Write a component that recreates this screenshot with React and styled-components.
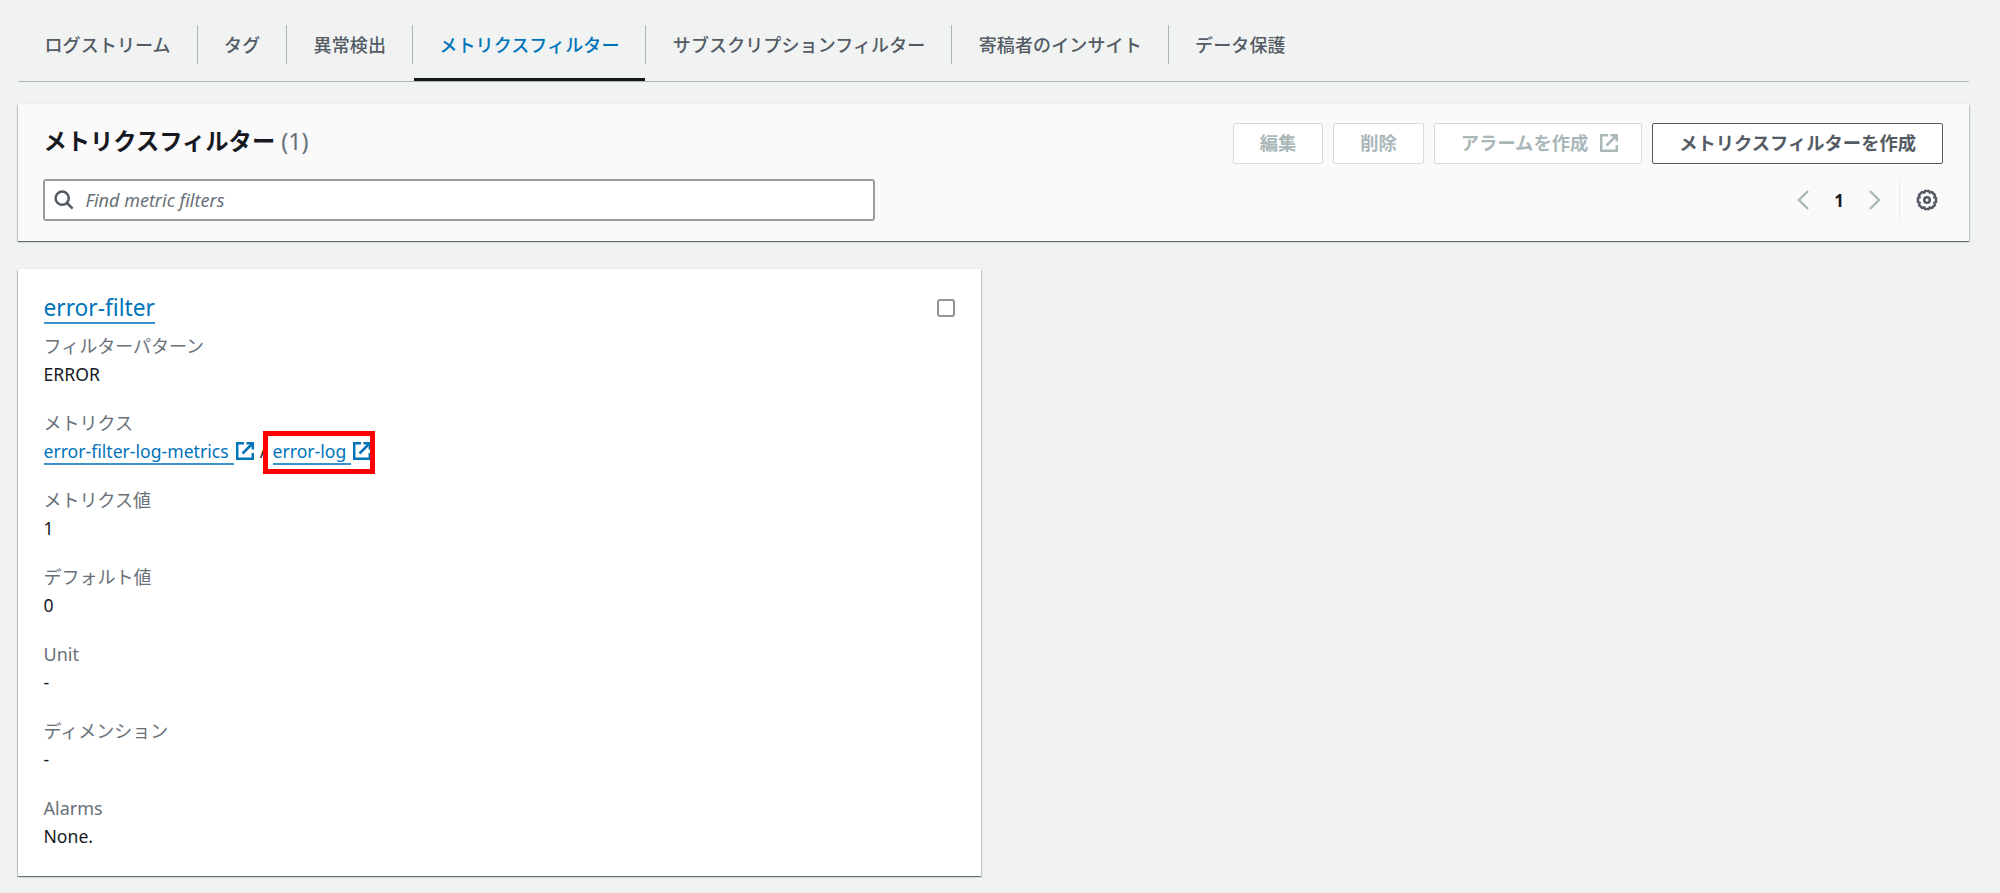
import React from "react";
import styled, { createGlobalStyle } from "styled-components";

const tabs = [
  "ログストリーム",
  "タグ",
  "異常検出",
  "メトリクスフィルター",
  "サブスクリプションフィルター",
  "寄稿者のインサイト",
  "データ保護",
];

const ExternalIcon = () => (
  <IconSvg viewBox="0 0 18 18" $size={18}>
    <path d="M8 1.2H1.2v15.6h15.6V11" />
    <path d="M10.5 1.2h6.3v6.3" />
    <path d="M6.5 11.5l9.5-9.5" />
  </IconSvg>
);

const SearchIcon = () => (
  <IconSvg viewBox="0 0 20 20" $size={20}>
    <circle cx="8.2" cy="8.2" r="6.6" />
    <path d="M13 13l5.6 5.6" />
  </IconSvg>
);

const GearIcon = () => (
  <IconSvg viewBox="0 0 22 22" $size={22}>
    <path d="M9 2h4l.8 1.6 2.2-.5 2.9 2.9-.5 2.2L20 9v4l-1.6.8.5 2.2-2.9 2.9-2.2-.5L13 20H9l-.8-1.6-2.2.5L3.1 16l.5-2.2L2 13V9l1.6-.8L3.1 6 6 3.1l2.2.5z" />
    <circle cx="11" cy="11" r="2.8" />
  </IconSvg>
);

const App = () => {
  return (
    <>
      <GlobalStyle />
      <Page>
        <TabList>
          {tabs.map((tab) => (
            <Tab key={tab} $active={tab === "メトリクスフィルター"}>
              {tab}
            </Tab>
          ))}
        </TabList>

        <Header>
          <HeaderRow>
            <Title>
              メトリクスフィルター <span>(1)</span>
            </Title>
            <Actions>
              <Button disabled>編集</Button>
              <Button disabled>削除</Button>
              <Button disabled $withIcon>
                アラームを作成
                <ExternalIcon />
              </Button>
              <Button>メトリクスフィルターを作成</Button>
            </Actions>
          </HeaderRow>
          <FilterRow>
            <Search>
              <SearchIcon />
              <input placeholder="Find metric filters" />
            </Search>
            <Pagination>
              <Arrow viewBox="0 0 12 20">
                <path d="M11 1L2 10l9 9" />
              </Arrow>
              <PageNumber>1</PageNumber>
              <Arrow viewBox="0 0 12 20">
                <path d="M1 1l9 9-9 9" />
              </Arrow>
              <Settings>
                <GearIcon />
              </Settings>
            </Pagination>
          </FilterRow>
        </Header>

        <Card>
          <CardHeader>
            <CardTitle>error-filter</CardTitle>
            <Checkbox type="checkbox" />
          </CardHeader>
          <Field>
            <dt>フィルターパターン</dt>
            <dd>ERROR</dd>
          </Field>
          <Field>
            <dt>メトリクス</dt>
            <MetricLinks>
              <Link>
                <span>error-filter-log-metrics</span>
                <ExternalIcon />
              </Link>
              <Slash>/</Slash>
              <Link>
                <span>error-log</span>
                <ExternalIcon />
                <Highlight />
              </Link>
            </MetricLinks>
          </Field>
          <Field>
            <dt>メトリクス値</dt>
            <dd>1</dd>
          </Field>
          <Field>
            <dt>デフォルト値</dt>
            <dd>0</dd>
          </Field>
          <Field>
            <dt>Unit</dt>
            <dd>-</dd>
          </Field>
          <Field>
            <dt>ディメンション</dt>
            <dd>-</dd>
          </Field>
          <Field>
            <dt>Alarms</dt>
            <dd>None.</dd>
          </Field>
        </Card>
      </Page>
    </>
  );
};

const GlobalStyle = createGlobalStyle`
  * {
    box-sizing: border-box;
    margin: 0;
    padding: 0;
  }

  body {
    background: #f1f3f3;
    color: #16191f;
    font-family: "Noto Sans", "Noto Sans CJK JP", sans-serif;
    font-size: 17.6px;
    overflow: hidden;
  }

  button,
  input {
    font-family: inherit;
  }
`;

const Page = styled.main`
  width: 2000px;
  height: 893px;
  padding: 0 31px 0 18px;
`;

const TabList = styled.nav`
  display: flex;
  height: 82px;
  padding-top: 25px;
  border-bottom: 1px solid #aab7b8;
`;

const Tab = styled.div`
  position: relative;
  height: 39px;
  padding: 0 25.8px 0 26.5px;
  border-right: 1px solid #aab7b8;
  font-size: 18px;
  font-weight: 500;
  line-height: 40px;
  letter-spacing: 0.11px;
  white-space: nowrap;
  color: ${({ $active }) => ($active ? "#0073bb" : "#545b64")};

  &:last-child {
    border-right: none;
  }

  &::after {
    content: "";
    display: ${({ $active }) => ($active ? "block" : "none")};
    position: absolute;
    left: 1px;
    right: 0;
    bottom: -17px;
    height: 3px;
    background: #16191f;
  }
`;

const Header = styled.section`
  height: 137px;
  margin-top: 22px;
  padding: 19px 26px 0 25.4px;
  background: #fafafa;
  box-shadow: 0 1px 1px 0 rgba(0, 28, 36, 0.45), 1px 1px 1px 0 rgba(0, 28, 36, 0.15),
    -1px 1px 1px 0 rgba(0, 28, 36, 0.15), 0 -1px 0 0 #eaeded;
`;

const HeaderRow = styled.div`
  display: flex;
  justify-content: space-between;
  height: 56px;
`;

const Title = styled.h2`
  font-size: 23.3px;
  font-weight: 700;
  line-height: 36px;
  color: #16191f;

  span {
    font-weight: 400;
    color: #687078;
  }
`;

const Actions = styled.div`
  display: flex;
  gap: 10px;
`;

const Button = styled.button`
  display: flex;
  align-items: center;
  gap: 12px;
  height: 41px;
  padding: 0 ${({ $withIcon }) => ($withIcon ? 23 : 26)}px 1px 26px;
  border: 1px solid #545b64;
  border-radius: 2px;
  background: #fff;
  color: #545b64;
  font-size: 18.3px;
  font-weight: 700;
  line-height: 36px;
  white-space: nowrap;

  &:disabled {
    border-color: #d5dbdb;
    color: #aab7b8;
  }
`;

const FilterRow = styled.div`
  display: flex;
  justify-content: space-between;
`;

const Search = styled.label`
  display: flex;
  align-items: center;
  gap: 11px;
  width: 832px;
  height: 42px;
  padding-left: 9px;
  border: 2px solid #979fa5;
  border-radius: 3px;
  background: #fff;
  color: #545b64;

  input {
    flex: 1;
    padding-bottom: 1px;
    border: none;
    outline: none;
    background: transparent;
    font-size: 18px;
  }

  input::placeholder {
    color: #687078;
    font-style: italic;
  }
`;

const Pagination = styled.div`
  display: flex;
  align-items: center;
  height: 42px;
`;

const Arrow = styled.svg`
  width: 12px;
  height: 20px;
  fill: none;
  stroke: #aab7b8;
  stroke-width: 2.4;
`;

const PageNumber = styled.span`
  width: 60px;
  font-size: 17px;
  font-weight: 700;
  text-align: center;
`;

const Settings = styled.div`
  display: flex;
  align-items: center;
  height: 42px;
  margin-left: 18px;
  padding: 0 5px 0 16px;
  border-left: 1px solid #eaeded;
  color: #545b64;
`;

const IconSvg = styled.svg`
  flex: none;
  width: ${({ $size }) => $size}px;
  height: ${({ $size }) => $size}px;
  fill: none;
  stroke: currentColor;
  stroke-width: 2.5;
`;

const Card = styled.section`
  width: 963px;
  height: 607px;
  margin-top: 28px;
  padding: 25px 26px 0 25.5px;
  background: #fff;
  box-shadow: 0 1px 1px 0 rgba(0, 28, 36, 0.45), 1px 1px 1px 0 rgba(0, 28, 36, 0.15),
    -1px 1px 1px 0 rgba(0, 28, 36, 0.15), 0 -1px 0 0 #eaeded;
`;

const CardHeader = styled.div`
  display: flex;
  align-items: flex-start;
  justify-content: space-between;
  height: 38px;
`;

const CardTitle = styled.a`
  height: 30px;
  border-bottom: 2px solid #3a93cb;
  color: #0073bb;
  font-size: 22.7px;
  line-height: 28px;
`;

const Checkbox = styled.input`
  appearance: none;
  width: 18px;
  height: 18px;
  margin-top: 5px;
  border: 2px solid #8f979d;
  border-radius: 3px;
  background: #fff;
`;

const Field = styled.dl`
  height: 77px;
  line-height: 28px;

  dt {
    height: 28px;
    font-size: 18px;
    color: #687078;
  }

  dd {
    height: 28px;
  }
`;

const MetricLinks = styled.dd`
  display: flex;
  align-items: flex-start;
`;

const Link = styled.a`
  position: relative;
  display: flex;
  align-items: center;
  gap: 2px;
  height: 28px;
  color: #0073bb;

  span {
    height: 28px;
    padding-right: 5px;
    border-bottom: 2px solid #3a93cb;
    line-height: 28px;
  }
`;

const Slash = styled.span`
  width: 19px;
  text-align: center;
`;

const Highlight = styled.i`
  position: absolute;
  top: -6px;
  left: -10px;
  width: 112px;
  height: 43px;
  border: 5px solid #ff0000;
`;

export default App;
